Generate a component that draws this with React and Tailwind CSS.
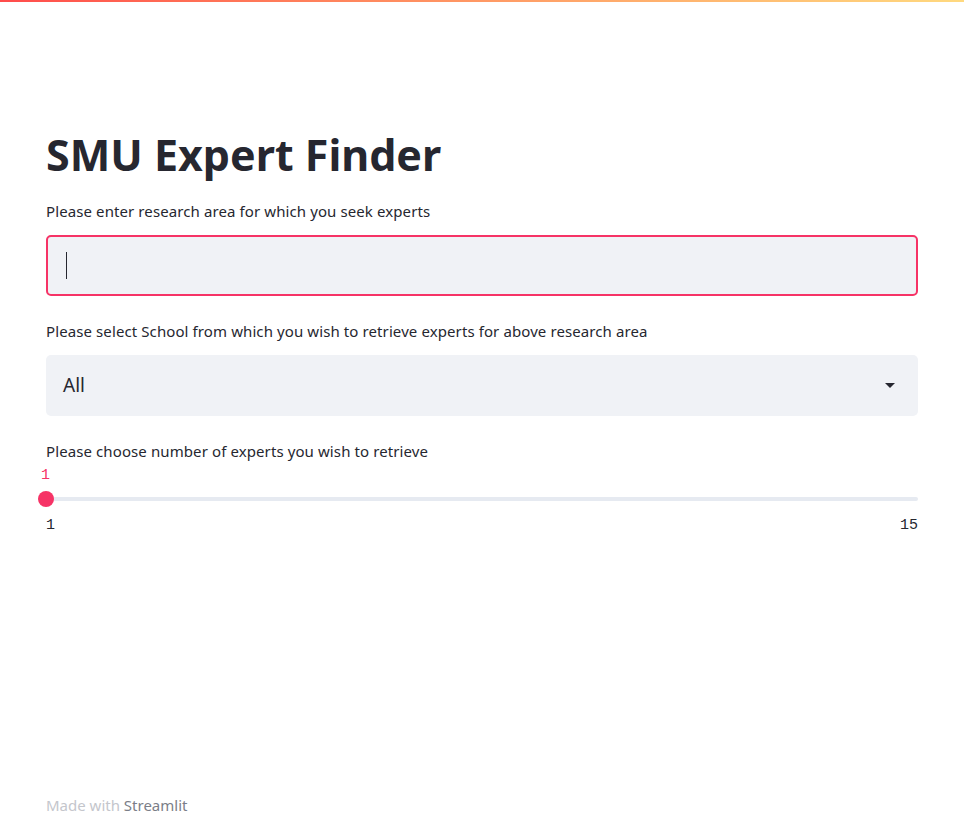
export default function App() {
  return (
    <div
      className="relative min-h-[824px] bg-white text-[#262730]"
      style={{ fontFamily: '"Noto Sans", "Open Sans", sans-serif' }}
    >
      <div className="h-[2px] w-full bg-gradient-to-r from-[#ff4b4b] to-[#ffd97f]" />

      <div className="px-[46px] pt-[124px]">
        <h1 className="text-[43px] font-bold leading-[58px] text-[#262730]">
          SMU Expert Finder
        </h1>

        <div className="mt-[17px]">
          <label className="block text-[15px] leading-[20px] tracking-[0.1px] text-[#262730]">
            Please enter research area for which you seek experts
          </label>
          <div className="mt-[14px] flex h-[61px] items-center rounded-[5px] border-2 border-[#f63366] bg-[#f0f2f6] pl-[18px]">
            <div className="h-[27px] w-px bg-[#262730]" />
          </div>
        </div>

        <div className="mt-[25px]">
          <label className="block text-[15px] leading-[20px] tracking-[0.1px] text-[#262730]">
            Please select School from which you wish to retrieve experts for above research area
          </label>
          <div className="mt-[14px] flex h-[61px] items-center justify-between rounded-[5px] bg-[#f0f2f6] pl-[17px] pr-[23px]">
            <span className="text-[19px] text-[#262730]">All</span>
            <svg width="10" height="6" viewBox="0 0 10 6">
              <path d="M0 0 L10 0 L5 5 Z" fill="#262730" />
            </svg>
          </div>
        </div>

        <div className="mt-[25px]">
          <label className="block text-[15px] leading-[20px] tracking-[0.1px] text-[#262730]">
            Please choose number of experts you wish to retrieve
          </label>
          <div
            className="mt-[5px] text-[15px] leading-[20px] text-[#f63366] -ml-[5px]"
            style={{ fontFamily: '"Liberation Mono", "DejaVu Sans Mono", monospace' }}
          >
            1
          </div>
          <div className="relative mt-[11px] h-[4px] rounded-full bg-[#e6eaf1]">
            <div className="absolute -left-[8px] -top-[6px] h-[16px] w-[16px] rounded-full bg-[#f63366]" />
          </div>
          <div
            className="mt-[15px] flex justify-between text-[15px] leading-[20px] text-[#262730]"
            style={{ fontFamily: '"Liberation Mono", "DejaVu Sans Mono", monospace' }}
          >
            <span>1</span>
            <span>15</span>
          </div>
        </div>
      </div>

      <div className="absolute bottom-[9px] left-[46px] text-[15px] leading-[20px] text-[#c4c6cc]">
        Made with <span className="text-[#7b7e88]">Streamlit</span>
      </div>
    </div>
  );
}
